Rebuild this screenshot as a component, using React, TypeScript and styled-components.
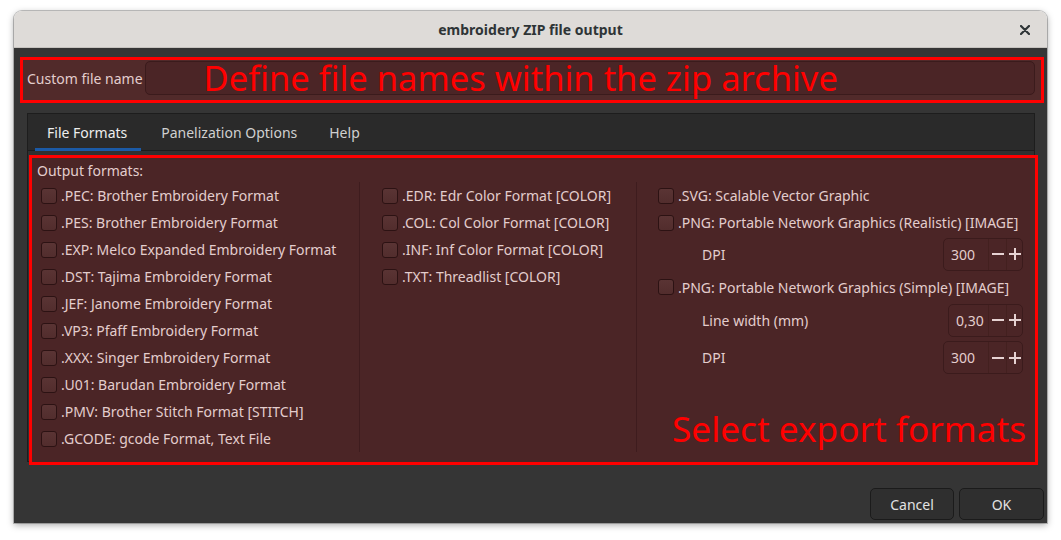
import React from 'react';
import styled, { createGlobalStyle } from 'styled-components';

const GlobalStyle = createGlobalStyle`
  html, body {
    margin: 0;
    padding: 0;
    background: #ffffff;
  }
  * {
    box-sizing: border-box;
  }
`;

const Page = styled.div`
  width: 1061px;
  height: 540px;
  padding: 11px 14px 0 14px;
  font-family: "Noto Sans", "DejaVu Sans", sans-serif;
  font-size: 14px;
`;

const Window = styled.div`
  width: 1033px;
  height: 512px;
  display: flex;
  flex-direction: column;
  border-radius: 8px 8px 0 0;
  overflow: hidden;
  box-shadow: 0 0 0 1px rgba(0, 0, 0, 0.22), 0 2px 7px rgba(0, 0, 0, 0.35);
`;

const TitleBar = styled.div`
  height: 37px;
  flex: none;
  display: flex;
  align-items: center;
  justify-content: center;
  position: relative;
  background: #dedbd8;
  border-bottom: 1px solid #c6c3bf;
  color: #2e3436;
  font-weight: 700;
  font-size: 14px;
`;

const CloseButton = styled.button`
  position: absolute;
  right: 11px;
  top: 8px;
  width: 22px;
  height: 22px;
  border: none;
  background: transparent;
  display: flex;
  align-items: center;
  justify-content: center;
  padding: 0;
  color: #2e3436;
`;

const Body = styled.div`
  flex: 1;
  display: flex;
  flex-direction: column;
  background: #353535;
  padding: 9px 3px 3px 6px;
`;

const NameHighlight = styled.div`
  height: 46px;
  border: 3px solid #ff0000;
  background: #512a2a;
  display: flex;
  align-items: center;
  padding: 1px 6px 5px 4px;
  gap: 2px;
`;

const FieldLabel = styled.span`
  color: #e3cdcd;
  white-space: nowrap;
`;

const Entry = styled.div`
  flex: 1;
  height: 34px;
  border: 1px solid #3b1b1c;
  border-radius: 5px;
  background: #4b2526;
  display: flex;
  align-items: center;
  padding-left: 58px;
  overflow: visible;
`;

const Annotation = styled.span<{ $size: number }>`
  color: #ff0000;
  font-size: ${p => p.$size}px;
  line-height: 34px;
  white-space: nowrap;
`;

const CornerAnnotation = styled(Annotation)`
  position: absolute;
  right: 9px;
  bottom: 16px;
  line-height: 36px;
`;

const Notebook = styled.div`
  margin: 10px 9px 0 7px;
  height: 349px;
  border: 1px solid #1d1d1d;
  background: #303030;
  display: flex;
  flex-direction: column;
`;

const TabBar = styled.div`
  height: 37px;
  flex: none;
  background: #2a2a2a;
  border-bottom: 1px solid #1d1d1d;
  display: flex;
  padding-left: 7px;
  gap: 8px;
`;

const Tab = styled.div<{ $active?: boolean }>`
  display: flex;
  align-items: center;
  padding: 3px 12px 0 12px;
  height: 37px;
  color: ${p => (p.$active ? '#eeeeee' : '#d0d0d0')};
  border-bottom: 3px solid ${p => (p.$active ? '#1b5aa6' : 'transparent')};

  &:first-child {
    padding-right: 14px;
  }
`;

const FormatsHighlight = styled.div`
  position: relative;
  flex: 1;
  margin: 4px -4px -4px 1px;
  border: 3px solid #ff0000;
  background: #4b2526;
  padding: 3px 12px 0 5px;
  color: #e3cdcd;
`;

const SectionTitle = styled.div`
  height: 20px;
  line-height: 20px;
`;

const Columns = styled.div`
  margin-top: 1px;
  display: grid;
  grid-template-columns: 322px 277px 1fr;
`;

const Column = styled.div<{ $pad: number; $divider?: boolean }>`
  display: flex;
  flex-direction: column;
  padding-left: ${p => p.$pad}px;
  border-left: ${p => (p.$divider ? '1px solid #3e1c1e' : 'none')};
  height: 270px;
`;

const CheckRow = styled.label<{ $h?: number }>`
  height: ${p => p.$h ?? 27}px;
  flex: none;
  display: flex;
  align-items: center;
  gap: 4px;
  white-space: nowrap;
`;

const Check = styled.span`
  width: 16px;
  height: 16px;
  flex: none;
  border-radius: 3px;
  border: 1px solid #2c1213;
  background: linear-gradient(#5a3434, #522d2d);
`;

const SpinRow = styled.div<{ $h: number }>`
  height: ${p => p.$h}px;
  flex: none;
  display: flex;
  align-items: center;
  justify-content: space-between;
  padding-left: 44px;
`;

const Spin = styled.div`
  height: 33px;
  display: flex;
  align-items: stretch;
  border: 1px solid #3b1b1c;
  border-radius: 5px;
`;

const SpinValue = styled.span<{ $w: number }>`
  width: ${p => p.$w}px;
  display: flex;
  align-items: center;
  padding-left: 7px;
`;

const SpinButton = styled.span<{ $last?: boolean }>`
  width: ${p => (p.$last ? 16 : 18)}px;
  display: flex;
  align-items: center;
  justify-content: center;
  border-left: 1px solid #43201f;
`;

const Actions = styled.div`
  margin-top: 26px;
  display: flex;
  justify-content: flex-end;
  gap: 5px;
`;

const Button = styled.button<{ $w: number }>`
  width: ${p => p.$w}px;
  height: 32px;
  border: 1px solid #1b1b1b;
  border-radius: 5px;
  background: #2f2f2f;
  color: #e2e2e2;
  font-family: inherit;
  font-size: 14px;
  padding: 0;
`;

const Minus = () => (
  <svg width="14" height="14" viewBox="0 0 14 14">
    <path d="M1 7h12" stroke="#e6d2d2" strokeWidth="2" />
  </svg>
);

const Plus = () => (
  <svg width="14" height="14" viewBox="0 0 14 14">
    <path d="M1 7h12M7 1v12" stroke="#e6d2d2" strokeWidth="2" />
  </svg>
);

const SpinBox: React.FC<{ value: string; width: number }> = ({ value, width }) => (
  <Spin>
    <SpinValue $w={width}>{value}</SpinValue>
    <SpinButton>
      <Minus />
    </SpinButton>
    <SpinButton $last>
      <Plus />
    </SpinButton>
  </Spin>
);

const stitchFormats = [
  '.PEC: Brother Embroidery Format',
  '.PES: Brother Embroidery Format',
  '.EXP: Melco Expanded Embroidery Format',
  '.DST: Tajima Embroidery Format',
  '.JEF: Janome Embroidery Format',
  '.VP3: Pfaff Embroidery Format',
  '.XXX: Singer Embroidery Format',
  '.U01: Barudan Embroidery Format',
  '.PMV: Brother Stitch Format [STITCH]',
  '.GCODE: gcode Format, Text File',
];

const colorFormats = [
  '.EDR: Edr Color Format [COLOR]',
  '.COL: Col Color Format [COLOR]',
  '.INF: Inf Color Format [COLOR]',
  '.TXT: Threadlist [COLOR]',
];

const FormatCheck: React.FC<{ label: string; h?: number }> = ({ label, h }) => (
  <CheckRow $h={h}>
    <Check />
    {label}
  </CheckRow>
);

const App: React.FC = () => {
  return (
    <Page>
      <GlobalStyle />
      <Window>
        <TitleBar>
          embroidery ZIP file output
          <CloseButton>
            <svg width="10" height="10" viewBox="0 0 10 10">
              <path d="M1 1l8 8M9 1l-8 8" stroke="#2e3436" strokeWidth="2.2" strokeLinecap="round" />
            </svg>
          </CloseButton>
        </TitleBar>
        <Body>
          <NameHighlight>
            <FieldLabel>Custom file name</FieldLabel>
            <Entry>
              <Annotation $size={34.5}>Define file names within the zip archive</Annotation>
            </Entry>
          </NameHighlight>
          <Notebook>
            <TabBar>
              <Tab $active>File Formats</Tab>
              <Tab>Panelization Options</Tab>
              <Tab>Help</Tab>
            </TabBar>
            <FormatsHighlight>
              <SectionTitle>Output formats:</SectionTitle>
              <Columns>
                <Column $pad={4}>
                  {stitchFormats.map(f => (
                    <FormatCheck key={f} label={f} />
                  ))}
                </Column>
                <Column $pad={22} $divider>
                  {colorFormats.map(f => (
                    <FormatCheck key={f} label={f} />
                  ))}
                </Column>
                <Column $pad={21} $divider>
                  <FormatCheck label=".SVG: Scalable Vector Graphic" />
                  <FormatCheck label=".PNG: Portable Network Graphics (Realistic) [IMAGE]" />
                  <SpinRow $h={36}>
                    DPI
                    <SpinBox value="300" width={44} />
                  </SpinRow>
                  <FormatCheck h={30} label=".PNG: Portable Network Graphics (Simple) [IMAGE]" />
                  <SpinRow $h={36}>
                    Line width (mm)
                    <SpinBox value="0,30" width={39} />
                  </SpinRow>
                  <SpinRow $h={39}>
                    DPI
                    <SpinBox value="300" width={44} />
                  </SpinRow>
                </Column>
              </Columns>
              <CornerAnnotation $size={35.2}>Select export formats</CornerAnnotation>
            </FormatsHighlight>
          </Notebook>
          <Actions>
            <Button $w={84}>Cancel</Button>
            <Button $w={85}>OK</Button>
          </Actions>
        </Body>
      </Window>
    </Page>
  );
};

export default App;
